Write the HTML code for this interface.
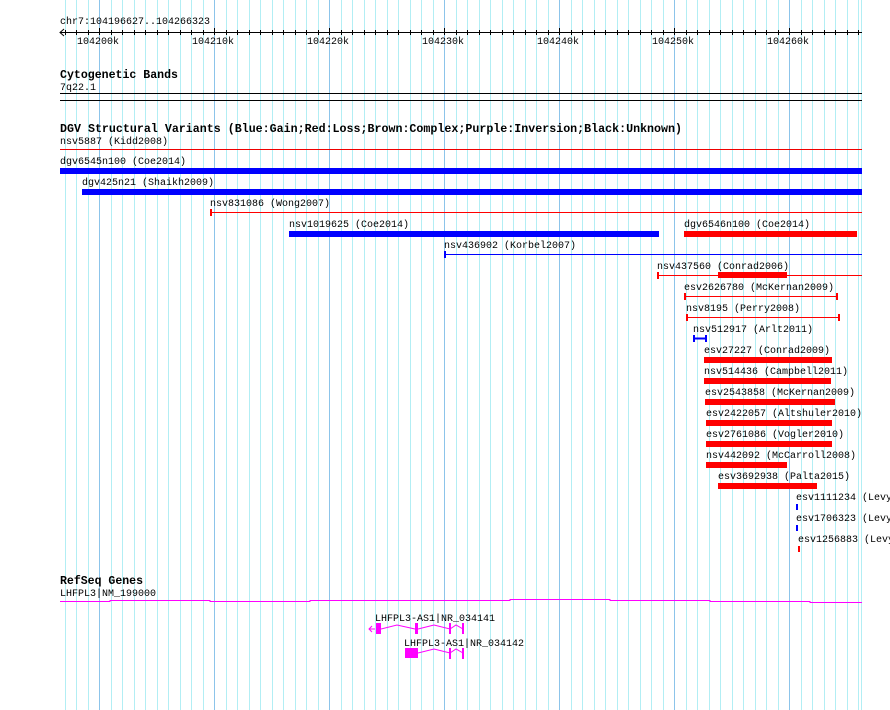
<!DOCTYPE html>
<html><head><meta charset="utf-8"><style>
html,body{margin:0;padding:0;background:#fff;width:890px;height:710px;overflow:hidden}
svg{display:block}
text{font-family:"Liberation Mono",monospace;font-size:10px;fill:#000}
.b{font-weight:bold;font-size:12px}
</style></head><body>
<svg width="890" height="710" xmlns="http://www.w3.org/2000/svg">
<path stroke="#b2eef4" stroke-width="1" fill="none" d="M65.5 0V710M76.5 0V710M88.5 0V710
M111.5 0V710M122.5 0V710M134.5 0V710M145.5 0V710M157.5 0V710M168.5 0V710M180.5 0V710M191.5 0V710M203.5 0V710
M226.5 0V710M237.5 0V710M249.5 0V710M260.5 0V710M272.5 0V710M283.5 0V710M295.5 0V710M306.5 0V710M318.5 0V710
M341.5 0V710M352.5 0V710M364.5 0V710M375.5 0V710M387.5 0V710M398.5 0V710M410.5 0V710M421.5 0V710M433.5 0V710
M456.5 0V710M467.5 0V710M479.5 0V710M490.5 0V710M502.5 0V710M513.5 0V710M525.5 0V710M536.5 0V710M548.5 0V710
M571.5 0V710M582.5 0V710M594.5 0V710M605.5 0V710M617.5 0V710M628.5 0V710M640.5 0V710M651.5 0V710M663.5 0V710
M686.5 0V710M697.5 0V710M709.5 0V710M720.5 0V710M732.5 0V710M743.5 0V710M755.5 0V710M766.5 0V710M778.5 0V710
M801.5 0V710M812.5 0V710M824.5 0V710M835.5 0V710M847.5 0V710M858.5 0V710M861.5 0V710"/>
<path stroke="#8cc4ea" stroke-width="1" fill="none" d="M99.5 0V710M214.5 0V710M329.5 0V710M444.5 0V710M559.5 0V710M674.5 0V710M789.5 0V710"/>

<text x="60" y="24">chr7:104196627..104266323</text>
<line x1="60" y1="32.5" x2="862" y2="32.5" stroke="#000"/>
<path d="M64 29 L60 32.5 L64 36" fill="none" stroke="#000"/>
<path stroke="#000" fill="none" d="M65.5 30V35M76.5 30V35M88.5 30V35
M111.5 30V35M122.5 30V35M134.5 30V35M145.5 30V35M157.5 30V35M168.5 30V35M180.5 30V35M191.5 30V35M203.5 30V35
M226.5 30V35M237.5 30V35M249.5 30V35M260.5 30V35M272.5 30V35M283.5 30V35M295.5 30V35M306.5 30V35M318.5 30V35
M341.5 30V35M352.5 30V35M364.5 30V35M375.5 30V35M387.5 30V35M398.5 30V35M410.5 30V35M421.5 30V35M433.5 30V35
M456.5 30V35M467.5 30V35M479.5 30V35M490.5 30V35M502.5 30V35M513.5 30V35M525.5 30V35M536.5 30V35M548.5 30V35
M571.5 30V35M582.5 30V35M594.5 30V35M605.5 30V35M617.5 30V35M628.5 30V35M640.5 30V35M651.5 30V35M663.5 30V35
M686.5 30V35M697.5 30V35M709.5 30V35M720.5 30V35M732.5 30V35M743.5 30V35M755.5 30V35M766.5 30V35M778.5 30V35
M801.5 30V35M812.5 30V35M824.5 30V35M835.5 30V35M847.5 30V35M858.5 30V35
M99.5 28V35M214.5 28V35M329.5 28V35M444.5 28V35M559.5 28V35M674.5 28V35M789.5 28V35"/>
<text x="77" y="44">104200k</text><text x="192" y="44">104210k</text><text x="307" y="44">104220k</text>
<text x="422" y="44">104230k</text><text x="537" y="44">104240k</text><text x="652" y="44">104250k</text><text x="767" y="44">104260k</text>

<text x="60" y="78" class="b" textLength="118" lengthAdjust="spacingAndGlyphs">Cytogenetic Bands</text>
<text x="60" y="90">7q22.1</text>
<line x1="60" y1="93.5" x2="862" y2="93.5" stroke="#000"/>
<line x1="60" y1="100.5" x2="862" y2="100.5" stroke="#000"/>

<text x="60" y="132" class="b" textLength="622" lengthAdjust="spacingAndGlyphs">DGV Structural Variants (Blue:Gain;Red:Loss;Brown:Complex;Purple:Inversion;Black:Unknown)</text>
<text x="60" y="144">nsv5887 (Kidd2008)</text>
<line x1="60" y1="149.5" x2="862" y2="149.5" stroke="#e00"/>
<text x="60" y="164">dgv6545n100 (Coe2014)</text>
<rect x="60" y="168" width="802" height="6" fill="#00f"/>
<text x="82" y="185">dgv425n21 (Shaikh2009)</text>
<rect x="82" y="189" width="780" height="6" fill="#00f"/>
<text x="210" y="206">nsv831086 (Wong2007)</text>
<line x1="210" y1="212.5" x2="862" y2="212.5" stroke="#f00"/><rect x="210" y="209" width="2" height="7" fill="#f00"/>
<text x="289" y="227">nsv1019625 (Coe2014)</text>
<rect x="289" y="231" width="370" height="6" fill="#00f"/>
<text x="684" y="227">dgv6546n100 (Coe2014)</text>
<rect x="684" y="231" width="173" height="6" fill="#f00"/>
<text x="444" y="248">nsv436902 (Korbel2007)</text>
<line x1="444" y1="254.5" x2="862" y2="254.5" stroke="#00f"/><rect x="444" y="251" width="2" height="7" fill="#00f"/>
<text x="657" y="269">nsv437560 (Conrad2006)</text>
<line x1="657" y1="275.5" x2="862" y2="275.5" stroke="#f00"/><rect x="657" y="272" width="2" height="7" fill="#f00"/>
<rect x="718" y="272" width="69" height="6" fill="#f00"/>
<text x="684" y="290">esv2626780 (McKernan2009)</text>
<line x1="685" y1="296.5" x2="837" y2="296.5" stroke="#f00"/><rect x="684" y="293" width="2" height="7" fill="#f00"/><rect x="836" y="293" width="2" height="7" fill="#f00"/>
<text x="686" y="311">nsv8195 (Perry2008)</text>
<line x1="687" y1="317.5" x2="839" y2="317.5" stroke="#f00"/><rect x="686" y="314" width="2" height="7" fill="#f00"/><rect x="838" y="314" width="2" height="7" fill="#f00"/>
<text x="693" y="332">nsv512917 (Arlt2011)</text>
<line x1="693" y1="338.5" x2="707" y2="338.5" stroke="#00f" stroke-width="2"/><rect x="693" y="335" width="2" height="7" fill="#00f"/><rect x="705" y="335" width="2" height="7" fill="#00f"/>
<text x="704" y="353">esv27227 (Conrad2009)</text><rect x="704" y="357" width="128" height="6" fill="#f00"/>
<text x="704" y="374">nsv514436 (Campbell2011)</text><rect x="704" y="378" width="127" height="6" fill="#f00"/>
<text x="705" y="395">esv2543858 (McKernan2009)</text><rect x="705" y="399" width="130" height="6" fill="#f00"/>
<text x="706" y="416">esv2422057 (Altshuler2010)</text><rect x="706" y="420" width="126" height="6" fill="#f00"/>
<text x="706" y="437">esv2761086 (Vogler2010)</text><rect x="706" y="441" width="126" height="6" fill="#f00"/>
<text x="706" y="458">nsv442092 (McCarroll2008)</text><rect x="706" y="462" width="81" height="6" fill="#f00"/>
<text x="718" y="479">esv3692938 (Palta2015)</text><rect x="718" y="483" width="99" height="6" fill="#f00"/>
<text x="796" y="500">esv1111234 (Levy</text><rect x="796" y="504" width="2" height="6" fill="#00f"/>
<text x="796" y="521">esv1706323 (Levy</text><rect x="796" y="525" width="2" height="6" fill="#00f"/>
<text x="798" y="542">esv1256883 (Levy</text><rect x="798" y="546" width="2" height="6" fill="#f00"/>

<text x="60" y="584" class="b" textLength="83" lengthAdjust="spacingAndGlyphs">RefSeq Genes</text>
<text x="60" y="596">LHFPL3|NM_199000</text>
<path d="M60 601.5 H110 V600.5 H210 V601.5 H310 V600.5 H510 V599.5 H610 V600.5 H710 V601.5 H810 V602.5 H862" fill="none" stroke="#f0f" stroke-width="1"/>
<text x="375" y="621">LHFPL3-AS1|NR_034141</text>
<path d="M369 629 L375 629 M372 626 L369 629 L372 632" fill="none" stroke="#f0f"/>
<rect x="376" y="623" width="5" height="11" fill="#f0f"/>
<path d="M381 629 L397 625 L415 629 M418 629 L434 625 L450 629 L456 625 L463 629" fill="none" stroke="#f0f"/>
<rect x="415" y="623" width="3" height="11" fill="#f0f"/>
<rect x="449" y="623" width="2" height="11" fill="#f0f"/><rect x="462" y="623" width="2" height="11" fill="#f0f"/>
<text x="404" y="646">LHFPL3-AS1|NR_034142</text>
<rect x="405" y="648" width="13" height="10" fill="#f0f"/>
<path d="M418 653 L434 649 L450 653 L456 649 L463 653" fill="none" stroke="#f0f"/>
<rect x="449" y="648" width="2" height="11" fill="#f0f"/><rect x="462" y="648" width="2" height="11" fill="#f0f"/>
</svg>
</body></html>
